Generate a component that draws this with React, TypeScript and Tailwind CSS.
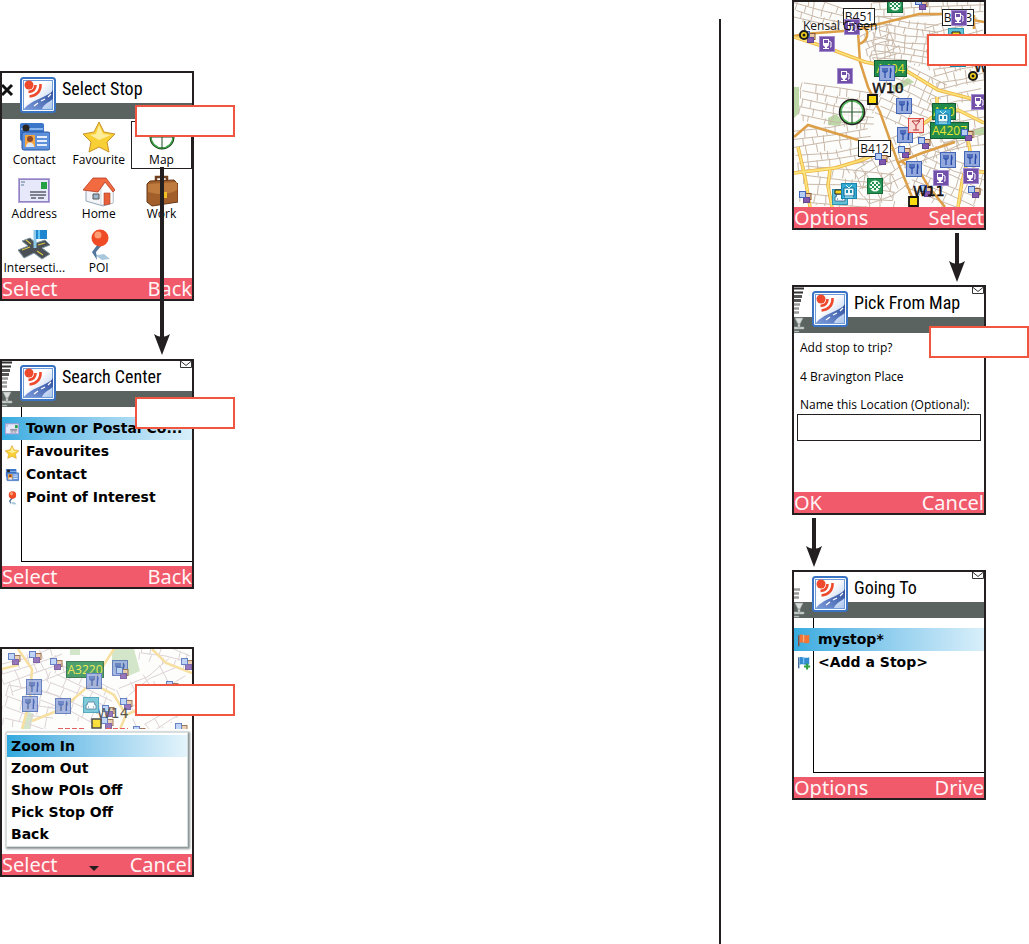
import type { ReactNode } from 'react';

type Point = [number, number];

interface MapMarkers {
  fuel: Point[];
  food: Point[];
  sights: Point[];
}

/** A patch of side streets: origin, size, rotation and block size */
interface Patch {
  x: number;
  y: number;
  w: number;
  h: number;
  angle: number;
  step: number;
}

/** Build slightly irregular street lines that fill one patch */
function buildStreets({ x, y, w, h, angle, step }: Patch): string {
  let seed = x * 31 + y * 17 + 7;
  const jitter = () => {
    seed = (seed * 1103515245 + 12345) % 2147483648;
    return (seed / 2147483648 - 0.5) * step * 0.8;
  };
  const rad = (angle * Math.PI) / 180;
  const place = (px: number, py: number) => {
    const dx = px - w / 2;
    const dy = py - h / 2;
    const rx = x + w / 2 + dx * Math.cos(rad) - dy * Math.sin(rad);
    const ry = y + h / 2 + dx * Math.sin(rad) + dy * Math.cos(rad);
    return `${rx.toFixed(1)} ${ry.toFixed(1)}`;
  };
  let d = '';
  for (let row = 0; row <= h; row += step) {
    d += `M${place(jitter(), row)}L${place(w / 2, row + jitter())}L${place(w + jitter(), row + jitter() / 2)}`;
    for (let col = 0; col <= w; col += step * 1.4) {
      const shift = jitter();
      d += `M${place(col + shift, row)}L${place(col + shift + jitter() / 3, Math.min(row + step, h))}`;
    }
  }
  return d;
}

const londonPatches: Patch[] = [
  { x: 0, y: 0, w: 50, h: 24, angle: 14, step: 7 },
  { x: 82, y: 18, w: 58, h: 44, angle: 8, step: 7 },
  { x: 136, y: 20, w: 56, h: 64, angle: -12, step: 7 },
  { x: 78, y: -2, w: 112, h: 14, angle: -3, step: 7 },
  { x: 72, y: 28, w: 30, h: 30, angle: -20, step: 7 },
  { x: 8, y: 86, w: 74, h: 38, angle: 8, step: 8 },
  { x: 0, y: 124, w: 78, h: 40, angle: -8, step: 8 },
  { x: 10, y: 168, w: 90, h: 38, angle: 5, step: 9 },
  { x: 90, y: 68, w: 52, h: 58, angle: 25, step: 8 },
  { x: 104, y: 122, w: 64, h: 36, angle: -22, step: 8 },
  { x: 122, y: 156, w: 66, h: 50, angle: 22, step: 9 },
  { x: 144, y: 92, w: 46, h: 54, angle: -10, step: 9 },
  { x: 62, y: 148, w: 50, h: 50, angle: -28, step: 9 },
];

const kensingtonPatches: Patch[] = [
  { x: 2, y: 4, w: 60, h: 34, angle: -20, step: 10 },
  { x: 44, y: 26, w: 64, h: 44, angle: 24, step: 10 },
  { x: 2, y: 42, w: 52, h: 40, angle: 14, step: 11 },
  { x: 128, y: 20, w: 60, h: 56, angle: -30, step: 11 },
  { x: 136, y: 0, w: 54, h: 16, angle: 12, step: 9 },
];

const londonMarkers: MapMarkers = {
  fuel: [[50, 17], [25, 34], [43, 66], [157, 8], [177, 92], [139, 168], [169, 166]],
  food: [[85, 63], [102, 96], [103, 125], [112, 159], [146, 150], [170, 149]],
  sights: [[121, -4], [9, 29], [124, 135], [104, 144], [81, 151], [167, 127], [126, 183], [174, 184], [5, 189]],
};

const kensingtonMarkers: MapMarkers = {
  fuel: [],
  food: [[24, 30], [20, 47], [53, 49], [84, 24], [110, 11]],
  sights: [[6, 4], [27, 2], [48, 9], [179, 9], [164, 32], [118, 49], [114, 18], [100, 56], [99, 68], [131, 77], [173, 74]],
};

function FoodMarker({ at: [x, y] }: { at: Point }) {
  return (
    <g transform={`translate(${x} ${y})`}>
      <rect x=".5" y=".5" width="15" height="15" fill="#93a8dc" stroke="#4667b5" />
      <path d="M4 3v4M6 3v4M8 3v4M4 7h4M6 7v6" stroke="#2549a8" fill="none" strokeWidth="1.2" />
      <path d="M11 2.5c2 1 2 4 1 6V13h-1.5Z" fill="#2549a8" />
    </g>
  );
}

function FuelMarker({ at: [x, y] }: { at: Point }) {
  return (
    <g transform={`translate(${x} ${y})`}>
      <rect x=".5" y=".5" width="15" height="15" fill="#7250aa" stroke="#a48cd0" />
      <path d="M4 3h6v5c0 2-1 2-2 3v1h2v1H4v-1h2v-1C4 10 4 9 4 8Z" fill="#fff" />
      <path d="M5 4h4v3H5Z" fill="#7250aa" />
      <path d="M10 5l2 1v5h-1" stroke="#fff" fill="none" />
    </g>
  );
}

function SightMarker({ at: [x, y] }: { at: Point }) {
  return (
    <g transform={`translate(${x} ${y})`}>
      <rect x="6" y="2.500" width="6" height="6" fill="#e8c6a4" stroke="#8b5a35" />
      <rect x="4.500" y="6.500" width="6" height="5" fill="#8058ad" stroke="#644493" />
      <rect x=".5" y=".5" width="6" height="6" fill="#b3cdf5" stroke="#4264ba" />
    </g>
  );
}

function TramMarker({ at: [x, y] }: { at: Point }) {
  return (
    <g transform={`translate(${x} ${y})`}>
      <rect x=".5" y=".5" width="15" height="15" fill="#35a9cf" stroke="#1686b1" />
      <path d="M3 5h10v8H3Z" fill="#e9f8fd" stroke="#0c6c98" />
      <path d="M5 7h2v3H5ZM9 7h2v3H9Z" fill="#178ab3" />
      <path d="M5 2l3 3 3-3M4 14h8" stroke="#d6f3fc" fill="none" />
    </g>
  );
}

function CarMarker({ at: [x, y] }: { at: Point }) {
  return (
    <g transform={`translate(${x} ${y})`}>
      <rect x=".5" y=".5" width="15" height="15" fill="#62c0d4" stroke="#2f96b2" />
      <path d="M5 5h6l1 3h1v4H3V8h1Z" fill="#f5fdff" stroke="#346089" strokeWidth=".8" />
      <path d="M5 10h1M10 10h1" stroke="#346089" />
    </g>
  );
}

function ChessMarker({ at: [x, y] }: { at: Point }) {
  return (
    <g transform={`translate(${x} ${y})`}>
      <rect x=".5" y=".5" width="15" height="15" fill="#229151" stroke="#136c38" />
      <circle cx="8" cy="8" r="5.500" fill="#f2faf4" />
      <path
        d="M5 4h2v2H5ZM9 4h2v2H9ZM3 6h2v2H3ZM7 6h2v2H7ZM11 6h2v2h-2ZM5 8h2v2H5ZM9 8h2v2H9ZM7 10h2v2H7ZM3 10h2v1H3ZM11 10h2v1h-2Z"
        fill="#229151"
      />
    </g>
  );
}

interface RoadSignProps {
  x: number;
  y: number;
  width: number;
  label: string;
  green?: boolean;
}

function RoadSign({ x, y, width, label, green = false }: RoadSignProps) {
  return (
    <g>
      <rect
        x={x + 0.5}
        y={y + 0.5}
        width={width - 1}
        height="16"
        fill={green ? '#228a4c' : '#fff'}
        stroke={green ? '#145c33' : '#222'}
      />
      <text
        x={x + width / 2}
        y={y + 13}
        textAnchor="middle"
        fill={green ? '#e9e531' : '#111'}
        className="font-['Open_Sans',sans-serif] text-[12px]"
      >
        {label}
      </text>
    </g>
  );
}

function Markers({ fuel, food, sights }: MapMarkers) {
  return (
    <>
      {fuel.map((at) => <FuelMarker key={at.join()} at={at} />)}
      {food.map((at) => <FoodMarker key={at.join()} at={at} />)}
      {sights.map((at) => <SightMarker key={at.join()} at={at} />)}
    </>
  );
}

function Station({ at: [x, y] }: { at: Point }) {
  return (
    <g>
      <circle cx={x} cy={y} r="4" fill="#f8d51c" stroke="#1b1b1b" strokeWidth="2" />
      <circle cx={x} cy={y} r="1.500" fill="#1b1b1b" />
    </g>
  );
}

/** Full size map with the crosshair in the middle */
function PickMap() {
  return (
    <svg viewBox="0 0 190 205" preserveAspectRatio="xMidYMid slice" className="block min-h-0 w-full flex-1 bg-[#fdfdfb]">
      <path d="M0 85h5v26l-5 5ZM34 116l8-4 6 6-2 6-12-1ZM98 84l16-8 6 4-20 10ZM178 128l12-3v8h-12Z" fill="#bcd8a7" />
      <g fill="none" stroke="#c9b9aa">
        {londonPatches.map((patch) => (
          <path key={`${patch.x}-${patch.y}`} d={buildStreets(patch)} />
        ))}
      </g>
      <g fill="none" stroke="#dc9f48" strokeWidth="2.500">
        <path d="M0 34L10 32 63 28 81 23 125 12 148 12 190 20" />
        <path d="M64 30L66 60 74 85 86 110 103 158 122 205" />
        <path d="M103 161L128 151 161 140M0 135L14 123 64 138M108 160L126 170 134 184 151 205" />
        <path d="M68 24C78 30 72 40 65 42M180 13v14" />
      </g>
      <g fill="none" stroke="#f0b646" strokeWidth="3.500">
        <path d="M0 35L31 45 71 60 111 68 144 88 190 100" />
        <path d="M0 171L41 166 68 158 98 145M4 145L11 175 16 205M36 168L34 184 38 205" />
        <path d="M126 124L143 112 164 108 190 121M143 95v16M190 170H176M174 138L176 148 168 180 164 205" />
      </g>
      <g fill="none" stroke="#fae47c" strokeWidth="1.800">
        <path d="M0 35L31 45 71 60 111 68 144 88 190 100" />
        <path d="M0 171L41 166 68 158 98 145M4 145L11 175 16 205M36 168L34 184 38 205" />
        <path d="M126 124L143 112 164 108 190 121M143 95v16M190 170H176M174 138L176 148 168 180 164 205" />
      </g>
      <RoadSign x={49} y={6} width={32} label="B451" />
      <RoadSign x={148} y={7} width={32} label="B413" />
      <RoadSign x={64} y={138} width={33} label="B412" />
      <RoadSign x={80} y={58} width={33} label="A404" green />
      <RoadSign x={138} y={101} width={24} label="A40" green />
      <RoadSign x={136} y={120} width={39} label="A4207" green />
      <Markers {...londonMarkers} />
      <ChessMarker at={[93, -5]} />
      <ChessMarker at={[73, 176]} />
      <CarMarker at={[154, 26]} />
      <path d="M158 30h8v4h-8Z" fill="#f8d51c" stroke="#222" />
      <TramMarker at={[156, 49]} />
      <TramMarker at={[141, 107]} />
      <CarMarker at={[38, 187]} />
      <path d="M41 188h7v4h-7Z" fill="#f8d51c" stroke="#222" />
      <TramMarker at={[47, 181]} />
      <rect x="114.500" y="116.500" width="15" height="14" fill="#fbd9d5" stroke="#dd4a43" />
      <path d="M118 119h8l-4 4.500ZM122 123v5M119 128h6M123 119l4-2" stroke="#b4363a" fill="none" />
      <text x="9" y="28" fill="#111" className="font-['Open_Sans',sans-serif] text-[12px]">Kensal Green</text>
      <g fill="#111" stroke="#111" strokeWidth=".5" className="font-['DejaVu_Sans',sans-serif] text-[14px]">
        <text x="78" y="91">W10</text>
        <text x="119" y="194">W11</text>
        <text x="180" y="70">W</text>
      </g>
      <Station at={[10, 33]} />
      <Station at={[179, 74]} />
      <path d="M74 93h9v9h-9ZM115 195h9v9h-9Z" fill="#fadb10" stroke="#111" strokeWidth="1.800" />
      <g fill="none">
        <circle cx="58" cy="110" r="12" fill="#fff" fillOpacity=".7" stroke="#222" strokeWidth="2.500" />
        <circle cx="58" cy="110" r="11" stroke="#56b85b" strokeWidth="1.500" />
        <path d="M58 98v24M46 110h24" stroke="#2f5a33" strokeWidth="1.200" />
      </g>
    </svg>
  );
}

/** Faded map strip that stays visible above the options menu */
function MapStrip() {
  return (
    <svg viewBox="0 0 190 80" preserveAspectRatio="xMidYMin slice" className="block h-20 w-full shrink-0 bg-[#fdfdfb]">
      <path d="M110 0h22l6 22-14 6-14-8ZM24 62l8 3-4 15h-8ZM68 0h10v6H68Z" fill="#d3e6c9" />
      <g fill="none" stroke="#ddd3d8">
        {kensingtonPatches.map((patch) => (
          <path key={`${patch.x}-${patch.y}`} d={buildStreets(patch)} />
        ))}
      </g>
      <g fill="none" stroke="#f7dfa0" strokeWidth="2.500">
        <path d="M16 0L30 20 28 50 20 80M30 72L60 60 90 34 112 0M90 34L112 46 124 66 118 80M150 0L164 14 190 24" />
        <path d="M0 20L16 16M124 66L150 54 190 60" />
      </g>
      <g opacity=".8">
        <RoadSign x={64} y={12} width={38} label="A3220" green />
        <Markers {...kensingtonMarkers} />
        <text x="95" y="69" fill="#333" className="font-['DejaVu_Sans',sans-serif] text-[14px]">W14</text>
        <CarMarker at={[81, 48]} />
        <rect x="90" y="70" width="9" height="9" fill="#fadb10" stroke="#222" strokeWidth="1.500" />
      </g>
      <path d="M56 79.500h28M104 79.500h22" stroke="#e2615c" strokeDasharray="5 2" />
    </svg>
  );
}

function AppLogo() {
  return (
    <svg viewBox="0 0 36 36" className="mt-1 size-9 shrink-0">
      <defs>
        <linearGradient id="sky" x1="0" y1="0" x2="1" y2="1">
          <stop offset=".4" stopColor="#fff" />
          <stop offset="1" stopColor="#a9c4ec" />
        </linearGradient>
        <linearGradient id="road" x1="1" y1="0" x2="0" y2="1">
          <stop offset="0" stopColor="#2f4f9e" />
          <stop offset="1" stopColor="#7c9bdb" />
        </linearGradient>
      </defs>
      <rect x="1" y="1" width="34" height="34" rx="2.500" fill="#fff" stroke="#3a72c4" strokeWidth="2" />
      <rect x="3.500" y="3.500" width="29" height="29" fill="url(#sky)" stroke="#6f9bdb" />
      <path d="M33 13C29 20 12 22 4 32h18c2-5 7-7 11-10Z" fill="url(#road)" />
      <path d="M31 17l-3 3M25 22l-4 2M18 26l-4 3" stroke="#fff" strokeWidth="1.200" />
      <circle cx="9" cy="8" r="4.500" fill="#ee4a2e" />
      <g fill="none" stroke="#ee4a2e" strokeWidth="2.600">
        <path d="M15.500 8c0 4-2.500 6.500-7 7" />
        <path d="M20.500 7c.5 7-4 12-11 12.500" />
      </g>
    </svg>
  );
}

function SignalStatus({ weak = false }: { weak?: boolean }) {
  return (
    <svg viewBox="0 0 18 46" className="h-[46px] w-[18px] shrink-0">
      {!weak && (
        <>
          <path d="M0 1.500h10M0 5.500h9" stroke="#333" strokeWidth="2" />
          <path d="M0 9.500h8M0 13.500h7" stroke="#555" strokeWidth="3" />
        </>
      )}
      <path d="M0 17.500h6M0 21.500h5M0 25.500h5" stroke="#999" strokeWidth="2.500" />
      <path d="M1 31h8L6 37H4ZM4 37h2v4H4ZM0 40h10v2H0ZM0 44h5v1H0Z" fill="#d8dcda" stroke="#9aa19e" strokeWidth=".6" />
    </svg>
  );
}

function CloseMark() {
  return (
    <svg viewBox="0 0 18 46" className="h-[46px] w-[18px] shrink-0">
      <path d="M0 12l10 10M10 12l-10 10" stroke="#111" strokeWidth="3" />
    </svg>
  );
}

function MailIcon() {
  return (
    <svg viewBox="0 0 12 7" className="ml-auto h-[7px] w-3 shrink-0">
      <path d="M.5 0v6.500h11V0M.5 0L6 4.500 11.500 0" fill="none" stroke="#333" />
    </svg>
  );
}

interface PhoneProps {
  title?: string;
  status?: ReactNode;
  mail?: boolean;
  softkeys: [string, string];
  more?: boolean;
  overlay: ReactNode;
  children: ReactNode;
}

function Phone({ title, status, mail = false, softkeys, more = false, overlay, children }: PhoneProps) {
  return (
    <section className="relative w-[194px]">
      <div className="flex h-[230px] flex-col overflow-hidden border-2 border-[#231f20] bg-white">
        {title && (
          <header className="flex h-[46px] shrink-0 bg-[linear-gradient(to_bottom,#ffffff_30px,#5b6361_30px)]">
            {status}
            <AppLogo />
            <h2 className="ml-[6px] whitespace-nowrap font-['Roboto_Condensed','Lato',sans-serif] text-[18px] leading-[32px] text-black">
              {title}
            </h2>
            {mail && <MailIcon />}
          </header>
        )}
        {children}
        <footer className="flex h-[21px] shrink-0 items-center justify-between bg-[#f15a6b] font-['Noto_Sans',sans-serif] text-[20px] leading-[20px] text-[#fff4f5]">
          <button type="button">{softkeys[0]}</button>
          {more && (
            <svg viewBox="0 0 10 5" className="mt-2 h-[5px] w-[10px]">
              <path d="M0 0h10L5 5Z" fill="#231f20" />
            </svg>
          )}
          <button type="button">{softkeys[1]}</button>
        </footer>
      </div>
      {overlay}
    </section>
  );
}

function Callout({ className }: { className: string }) {
  return <div className={`absolute h-8 w-[100px] border-2 border-[#f0563f] bg-white ${className}`} />;
}

function Arrow({ length, className }: { length: number; className: string }) {
  return (
    <svg width="16" height={length} viewBox={`0 0 16 ${length}`} className={className}>
      <path d={`M8 0V${length - 16}`} stroke="#231f20" strokeWidth="4" />
      <path d={`M0 ${length - 21}q8 6 16 0L8 ${length}Z`} fill="#231f20" />
    </svg>
  );
}

function ContactIcon() {
  return (
    <>
      <rect x="2" y="2" width="24" height="18" rx="2" fill="#3c76c8" />
      <path d="M3 8h22" stroke="#8ab5ee" strokeWidth="2" />
      <circle cx="8" cy="7" r="3.500" fill="#2c2622" />
      <path d="M5 12h7v8H5Z" fill="#3faa58" />
      <rect x="4" y="11" width="28" height="18" rx="2" fill="#5f90dc" stroke="#2656a3" />
      <rect x="7" y="14" width="10" height="12" fill="#f7a63d" />
      <circle cx="12" cy="18" r="3" fill="#8a4a30" />
      <path d="M8 26c0-6 8-6 8 0Z" fill="#dde8fa" />
      <path d="M19 16h10M19 20h10M19 24h10" stroke="#e6eefb" strokeWidth="2" />
    </>
  );
}

function StarIcon() {
  return (
    <>
      <path d="M16 1l5 10 11 2-8 8 2 10-10-5-10 5 2-10-8-8 11-2Z" fill="#f8cf35" stroke="#c8912b" />
      <path d="M16 4l4 9 8 1-12 5-9-5 6-1Z" fill="#fdee9b" />
    </>
  );
}

function TargetIcon() {
  return (
    <>
      <circle cx="16" cy="16" r="11.500" fill="#fff" stroke="#1c3a1e" strokeWidth="2" />
      <circle cx="16" cy="16" r="11" fill="none" stroke="#3fae49" strokeWidth="1.200" />
      <path d="M16 5v22M5 16h22" stroke="#1f4f24" />
    </>
  );
}

function LetterIcon() {
  return (
    <>
      <rect x="0" y="3" width="32" height="25" fill="#b6a6dc" />
      <rect x="1.500" y="4.500" width="29" height="22" fill="#e7e9fa" stroke="#8f84bf" />
      <path d="M3 7h4M3 10h3" stroke="#8b9fb4" strokeWidth="1.500" />
      <rect x="23" y="7" width="6" height="7" fill="#25a043" />
      <path d="M12 17h16M12 20h16M13 23h5M20 23h6" stroke="#5c5e6b" strokeWidth="1.500" />
    </>
  );
}

function HouseIcon() {
  return (
    <>
      <path d="M3 14L12 6l12 0 6 8v14l-10 3L3 26Z" fill="#f3f5f8" stroke="#93a5b5" />
      <path d="M18 13l5-7 7 8v14l-12 2Z" fill="#fdfdfd" stroke="#b9c4cc" strokeWidth=".6" />
      <path d="M0 15L10 3l13 0 9 12-2 2-8-10-7 10Z" fill="#f26a40" stroke="#b63a21" strokeWidth=".8" />
      <path d="M21 18h6v11l-6 1Z" fill="#e8603a" stroke="#a93c25" strokeWidth=".6" />
      <path d="M10 19h6v5h-6Z" fill="#9db7cc" stroke="#555" />
    </>
  );
}

function BriefcaseIcon() {
  return (
    <>
      <path d="M10 7V2h11v5" fill="none" stroke="#70401e" strokeWidth="2.500" />
      <path d="M4 6l24-1 4 4v18l-26 4-5-4V9Z" fill="#a35f2b" stroke="#673616" />
      <path d="M2 9l29-2v8c-8 5-19 5-29 2Z" fill="#be7b3d" />
      <path d="M16 17h5v6h-5Z" fill="#f2be26" />
    </>
  );
}

function CrossroadsIcon() {
  return (
    <>
      <path d="M0 21l10-4-6-5 8-3 6 5 9-3 5 5-8 3 8 6-8 5-8-6-10 5Z" fill="#4a5055" stroke="#7e97a4" />
      <path d="M4 21l8-3M20 16l7-2M8 11l5 4M19 22l6 4" stroke="#d8c645" strokeWidth="1.200" />
      <path d="M17 1v18" stroke="#8fc9e8" strokeWidth="3" />
      <path d="M18 1h11v9H18Z" fill="#2086cf" />
      <path d="M21 1v9" stroke="#63c6f4" strokeWidth="2" />
    </>
  );
}

function PinIcon() {
  return (
    <>
      <path d="M9 24l6 2 6-1 6 5-8 1Z" fill="#a9c8dc" />
      <path d="M15 15l-6 8 5 8-1-8 6-7Z" fill="#53779a" />
      <circle cx="17" cy="9" r="8.500" fill="#ee4b26" />
      <circle cx="15" cy="6" r="3.500" fill="#ff9e74" />
    </>
  );
}

function FlagIcon() {
  return (
    <>
      <path d="M4 5v25" stroke="#8b4632" strokeWidth="3" />
      <path d="M6 4c7-3 11 4 22 0v18c-9 4-14-3-22 1Z" fill="#f27535" />
      <path d="M15 4v16" stroke="#fbb088" strokeWidth="3" />
    </>
  );
}

function AddFlagIcon() {
  return (
    <>
      <path d="M4 3v25" stroke="#316293" strokeWidth="3" />
      <path d="M6 3c7-3 11 4 22 0v16c-9 4-14-3-22 1Z" fill="#338bd2" />
      <path d="M15 3v14" stroke="#7bc5f3" strokeWidth="3" />
      <path d="M23 17v14M16 24h14" stroke="#31a345" strokeWidth="5" />
    </>
  );
}

const stopSources: { label: string; icon: ReactNode; selected?: boolean }[] = [
  { label: 'Contact', icon: <ContactIcon /> },
  { label: 'Favourite', icon: <StarIcon /> },
  { label: 'Map', icon: <TargetIcon />, selected: true },
  { label: 'Address', icon: <LetterIcon /> },
  { label: 'Home', icon: <HouseIcon /> },
  { label: 'Work', icon: <BriefcaseIcon /> },
  { label: 'Intersecti...', icon: <CrossroadsIcon /> },
  { label: 'POI', icon: <PinIcon /> },
];

function StopGrid() {
  return (
    <div className="grid flex-1 grid-cols-[1fr_1fr_61px] content-start gap-y-[6px] pt-[2px] font-['Open_Sans',sans-serif] text-[12px] leading-[14px]">
      {stopSources.map(({ label, icon, selected }) => (
        <button
          key={label}
          type="button"
          className={`flex h-12 flex-col items-center whitespace-nowrap ${selected ? 'outline outline-1 -outline-offset-1 outline-[#231f20]' : ''}`}
        >
          <svg viewBox="0 0 32 32" className="size-8">{icon}</svg>
          {label}
        </button>
      ))}
    </div>
  );
}

interface ListItem {
  label: string;
  icon: ReactNode;
}

/** Icon gutter on the left, first row highlighted */
function IconList({ items }: { items: ListItem[] }) {
  return (
    <div className="flex flex-1 flex-col pb-1">
      <div className="ml-[19px] h-[10px] border-l border-black" />
      <ul className="font-['DejaVu_Sans',sans-serif] text-[14px] font-bold leading-[23px]">
        {items.map(({ label, icon }, index) => (
          <li key={label} className={index === 0 ? 'bg-linear-to-r from-[#35ace0] to-[#d8effa]' : ''}>
            <button type="button" className="flex h-[23px] w-full items-center whitespace-nowrap">
              <span className="flex w-[19px] shrink-0 justify-center">
                <svg viewBox="0 0 32 32" className="size-[14px]">{icon}</svg>
              </span>
              <span className={`h-full border-l pl-1 ${index === 0 ? 'border-transparent' : 'border-black'}`}>
                {label}
              </span>
            </button>
          </li>
        ))}
      </ul>
      <div className="ml-[19px] flex-1 border-b border-l border-black" />
    </div>
  );
}

const mapOptions = ['Zoom In', 'Zoom Out', 'Show POIs Off', 'Pick Stop Off', 'Back'];

function OptionsMenu() {
  return (
    <div className="flex-1 bg-white px-1 pt-[3px]">
      <ul className="border border-[#d5dddd] bg-white pb-[1px] pt-[2px] font-['DejaVu_Sans',sans-serif] text-[14px] font-bold leading-[22px] shadow-[1px_1px_2px_1px_#8a9393]">
        {mapOptions.map((option, index) => (
          <li key={option} className={index === 0 ? 'bg-linear-to-r from-[#2fa9de] to-[#e4f4fb]' : ''}>
            <button type="button" className="block h-[22px] w-full pl-1 text-left">{option}</button>
          </li>
        ))}
      </ul>
    </div>
  );
}

function LocationForm() {
  return (
    <form className="flex flex-1 flex-col px-[3px] font-['Open_Sans',sans-serif] text-[12px]">
      <p className="px-[3px] leading-[29px]">Add stop to trip?</p>
      <p className="px-[3px] leading-[29px]">4 Bravington Place</p>
      <label htmlFor="location-name" className="whitespace-nowrap px-[3px] pt-1 leading-[19px]">
        Name this Location (Optional):
      </label>
      <input id="location-name" type="text" className="h-[27px] w-full border border-[#231f20] bg-white px-1" />
    </form>
  );
}

export default function App() {
  return (
    <main className="flex min-h-screen overflow-x-hidden bg-white text-black">
      <div className="flex flex-1 flex-col gap-[58px] pt-[71px]">
        <Phone
          title="Select Stop"
          status={<CloseMark />}
          softkeys={['Select', 'Back']}
          overlay={
            <>
              <Callout className="left-[135px] top-[34px]" />
              <Arrow length={188} className="absolute left-[154px] top-24 z-10" />
            </>
          }
        >
          <StopGrid />
        </Phone>
        <Phone
          title="Search Center"
          status={<SignalStatus />}
          mail
          softkeys={['Select', 'Back']}
          overlay={<Callout className="left-[135px] top-[38px]" />}
        >
          <IconList
            items={[
              { label: 'Town or Postal Co...', icon: <LetterIcon /> },
              { label: 'Favourites', icon: <StarIcon /> },
              { label: 'Contact', icon: <ContactIcon /> },
              { label: 'Point of Interest', icon: <PinIcon /> },
            ]}
          />
        </Phone>
        <Phone softkeys={['Select', 'Cancel']} more overlay={<Callout className="left-[135px] top-[37px]" />}>
          <MapStrip />
          <OptionsMenu />
        </Phone>
      </div>

      <div className="mt-[19px] w-[2px] shrink-0 bg-[#231f20]" />

      <div className="flex w-[308px] shrink-0 flex-col pl-[71px]">
        <Phone softkeys={['Options', 'Select']} overlay={<Callout className="left-[135px] top-[34px]" />}>
          <PickMap />
        </Phone>
        <div className="flex h-[55px] items-center pl-[157px]">
          <Arrow length={49} className="shrink-0" />
        </div>
        <Phone
          title="Pick From Map"
          status={<SignalStatus />}
          mail
          softkeys={['OK', 'Cancel']}
          overlay={<Callout className="left-[137px] top-[41px]" />}
        >
          <LocationForm />
        </Phone>
        <div className="flex h-[55px] items-center pl-[14px]">
          <Arrow length={49} className="shrink-0" />
        </div>
        <Phone title="Going To" status={<SignalStatus weak />} mail softkeys={['Options', 'Drive']} overlay={null}>
          <IconList
            items={[
              { label: 'mystop*', icon: <FlagIcon /> },
              { label: '<Add a Stop>', icon: <AddFlagIcon /> },
            ]}
          />
        </Phone>
      </div>
    </main>
  );
}
